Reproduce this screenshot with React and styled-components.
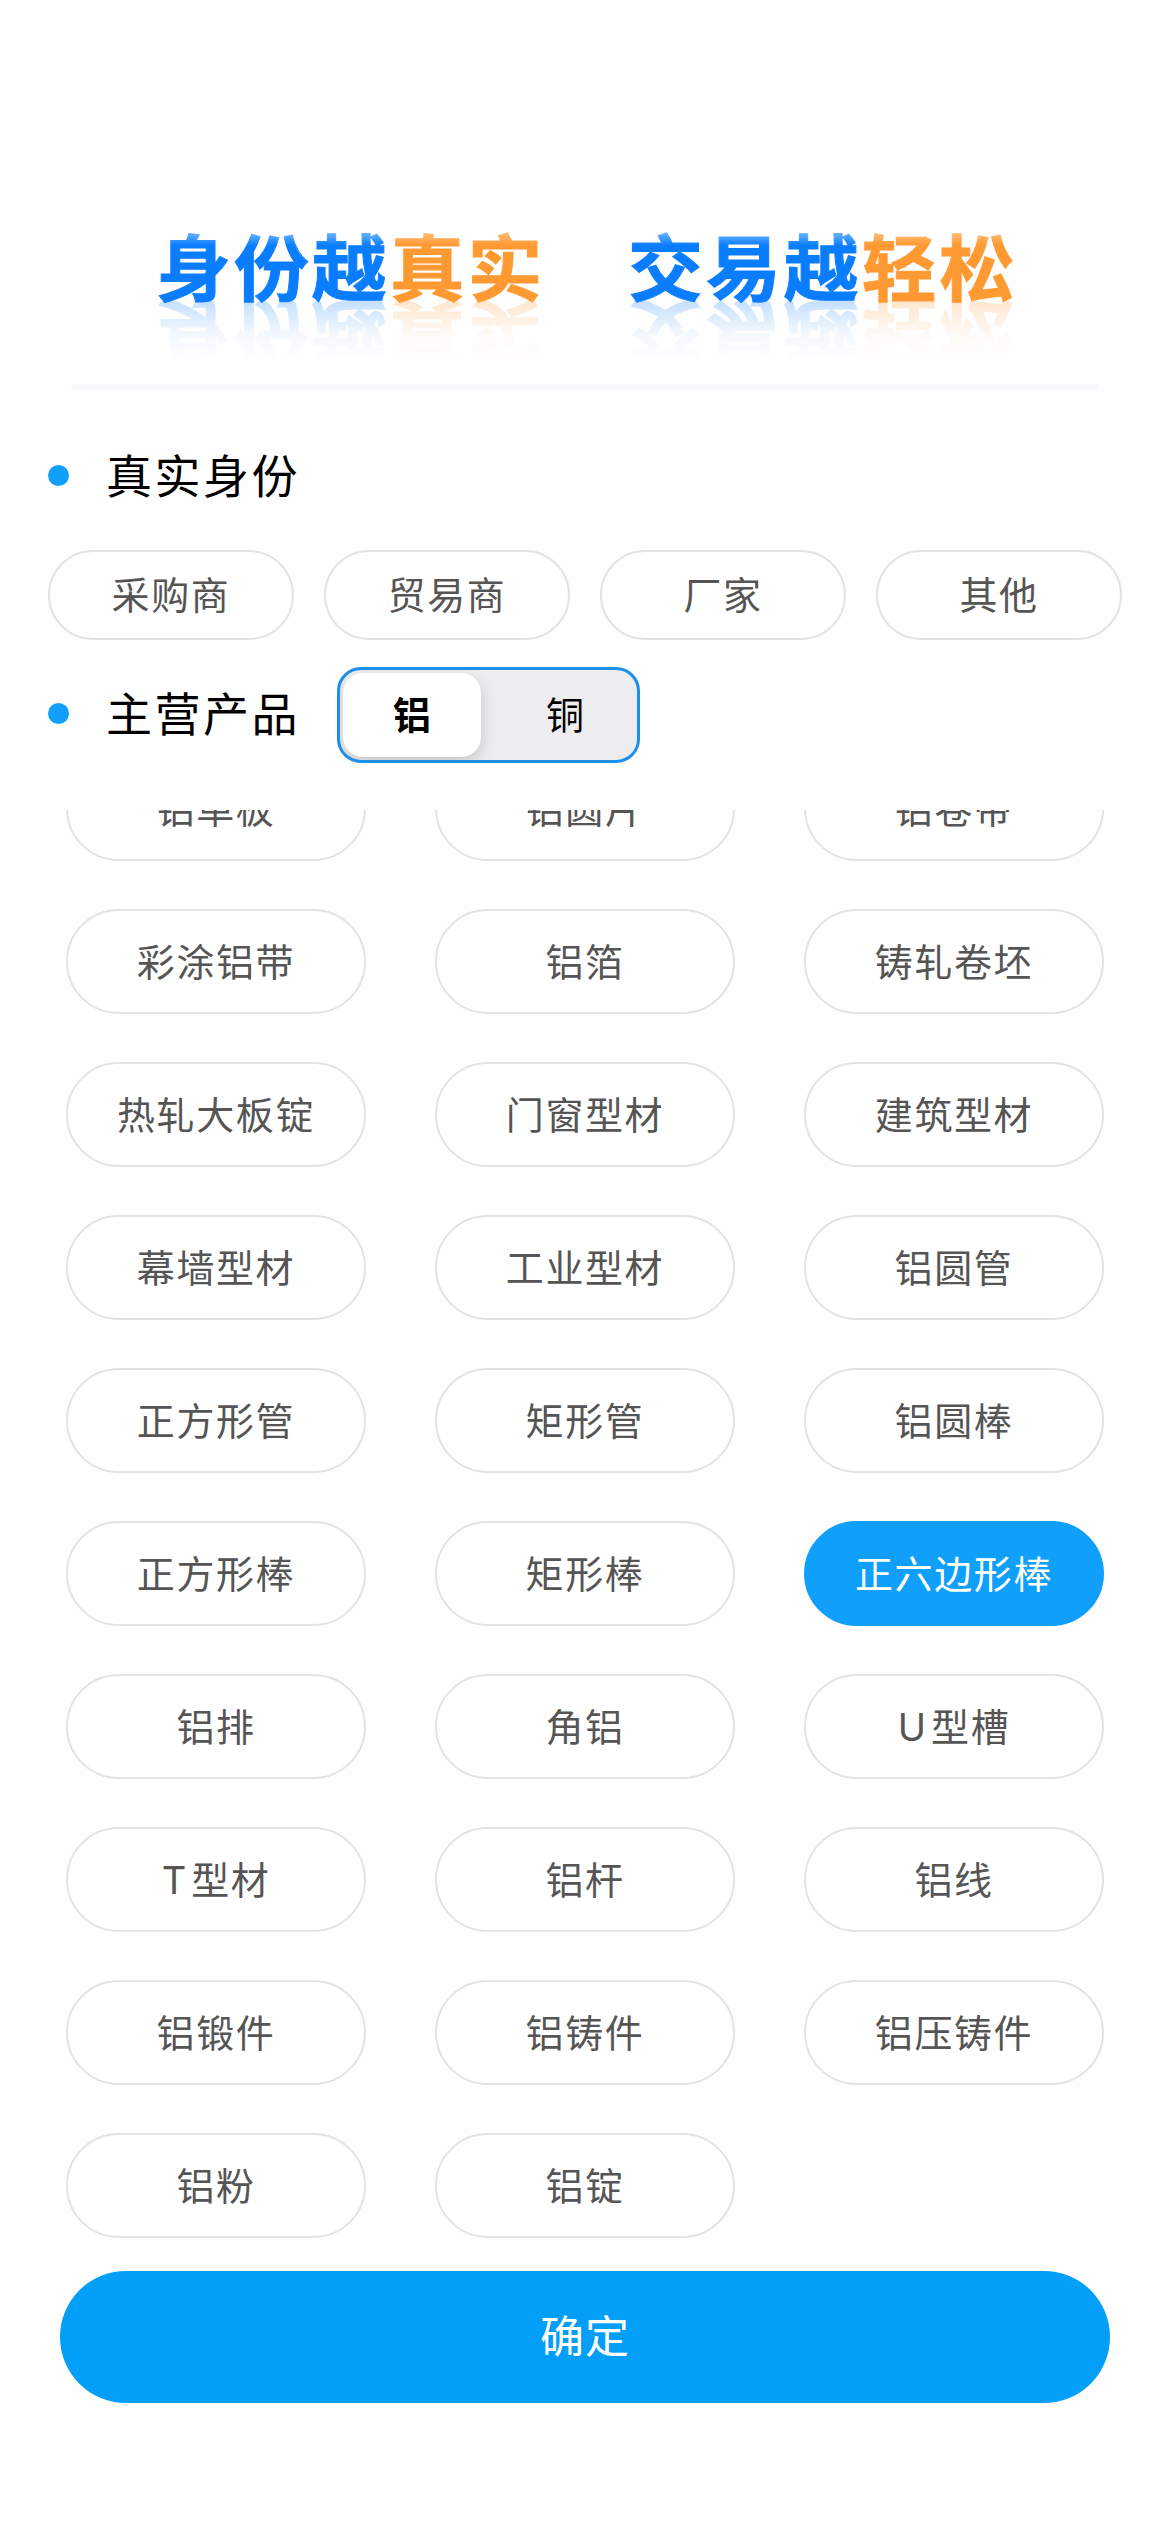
import React, { useState } from "react";
import styled, { createGlobalStyle } from "styled-components";

const GlobalStyle = createGlobalStyle`
  * { box-sizing: border-box; }
  body {
    margin: 0;
    background: #fefefe;
    font-family: Inter, "Noto Sans CJK SC", sans-serif;
    color: #000;
  }
  button { font-family: inherit; padding: 0; margin: 0; cursor: pointer; }
`;

const Page = styled.main`
  width: 1170px;
  height: 2532px;
  display: flex;
  flex-direction: column;
  overflow: hidden;
`;

const Banner = styled.header`
  display: flex;
  gap: 97px;
  height: 390px;
  margin: 0 72px;
  padding: 229px 0 0 84px;
  border-bottom: 6px solid #f8f9fc;
`;

const Slogan = styled.div`
  display: flex;
  width: 375px;
  height: 74px;
  transform: scaleX(1.04);
  transform-origin: left;
  -webkit-box-reflect: below -5px linear-gradient(to bottom, transparent 12%, rgba(0, 0, 0, 0.04) 50%, rgba(0, 0, 0, 0.25) 100%);
`;

const SloganWord = styled.span`
  font-family: "Noto Sans CJK SC", sans-serif;
  font-size: 72px;
  font-weight: 700;
  letter-spacing: 2.9px;
  line-height: 69px;
  white-space: nowrap;
  color: transparent;
  -webkit-text-stroke: 1px transparent;
  background: linear-gradient(
    to bottom,
    ${(p) => (p.$accent ? "#ffb56a 0 8%, #ff9a32 22%" : "#5aabff 0 8%, #0a7dff 22%")}
  );
  -webkit-background-clip: text;
  background-clip: text;
`;

const SectionHead = styled.div`
  display: flex;
  align-items: center;
  height: ${(p) => p.$height}px;
  padding: ${(p) => p.$top || 0}px 0 ${(p) => p.$bottom || 0}px 48px;
`;

const Dot = styled.i`
  width: 21px;
  height: 21px;
  border-radius: 50%;
  background: #109ffa;
`;

const SectionTitle = styled.h2`
  width: 194px;
  margin: 0 0 0 37px;
  font-size: 46px;
  font-weight: 400;
  letter-spacing: 2.5px;
  line-height: 60px;
  white-space: nowrap;
`;

const Roles = styled.div`
  display: flex;
  gap: 30px;
  margin: 0 48px;
`;

const Pill = styled.button`
  display: flex;
  align-items: center;
  justify-content: center;
  width: ${(p) => p.$width}px;
  height: ${(p) => p.$height}px;
  border: 2px solid ${(p) => (p.$active ? "#109ffa" : "#e3e3e3")};
  border-radius: 60px;
  background: ${(p) => (p.$active ? "#109ffa" : "#fff")};
  color: ${(p) => (p.$active ? "#fff" : "#555")};
  font-size: 38px;
  letter-spacing: 1.6px;
  line-height: 50px;
`;

const PillLabel = styled.span`
  display: block;

  &::first-letter {
    letter-spacing: ${(p) => (p.$latin ? 5 : 1.6)}px;
  }
`;

const Segments = styled.div`
  display: flex;
  justify-content: space-between;
  width: 303px;
  height: 96px;
  margin: 3px 0 0 37px;
  padding: 3px;
  border: 3px solid #1b90ea;
  border-radius: 24px;
  background: #ededef;
  overflow: hidden;
`;

const Segment = styled.button`
  width: 138px;
  height: 84px;
  border: 0;
  border-radius: 20px;
  background: ${(p) => (p.$active ? "#fff" : "transparent")};
  box-shadow: ${(p) => (p.$active ? "0 6px 16px rgba(0, 0, 0, 0.16)" : "none")};
  color: #000;
  font-size: 38px;
  font-weight: ${(p) => (p.$active ? 700 : 400)};
  line-height: 50px;
`;

const ProductViewport = styled.section`
  display: flex;
  flex-direction: column;
  justify-content: flex-end;
  height: 1461px;
  padding-bottom: 33px;
  margin-top: 18px;
  overflow: hidden;
`;

const ProductGrid = styled.div`
  display: grid;
  flex: none;
  grid-template-columns: repeat(3, 300px);
  gap: 48px 69px;
  padding-left: 66px;
`;

const Confirm = styled.button`
  height: 132px;
  flex: none;
  margin: 0 60px;
  border: 0;
  border-radius: 66px;
  background: #029ef8;
  color: #fff;
  font-size: 44px;
  letter-spacing: 1px;
  line-height: 60px;
`;

const slogans = [
  ["身份越", "真实"],
  ["交易越", "轻松"],
];
const roles = ["采购商", "贸易商", "厂家", "其他"];
const metals = ["铝", "铜"];
const products = [
  "铝单板", "铝圆片", "铝卷带",
  "彩涂铝带", "铝箔", "铸轧卷坯",
  "热轧大板锭", "门窗型材", "建筑型材",
  "幕墙型材", "工业型材", "铝圆管",
  "正方形管", "矩形管", "铝圆棒",
  "正方形棒", "矩形棒", "正六边形棒",
  "铝排", "角铝", "U型槽",
  "T型材", "铝杆", "铝线",
  "铝锻件", "铝铸件", "铝压铸件",
  "铝粉", "铝锭",
];

export default function App() {
  const [role, setRole] = useState(null);
  const [metal, setMetal] = useState("铝");
  const [product, setProduct] = useState("正六边形棒");

  return (
    <Page>
      <GlobalStyle />
      <Banner>
        {slogans.map(([lead, accent]) => (
          <Slogan key={accent}>
            <SloganWord>{lead}</SloganWord>
            <SloganWord $accent>{accent}</SloganWord>
          </Slogan>
        ))}
      </Banner>

      <SectionHead $height={160} $top={11}>
        <Dot />
        <SectionTitle>真实身份</SectionTitle>
      </SectionHead>
      <Roles>
        {roles.map((name) => (
          <Pill key={name} $width={246} $height={90} $active={role === name} onClick={() => setRole(name)}>
            <PillLabel>{name}</PillLabel>
          </Pill>
        ))}
      </Roles>

      <SectionHead $height={152} $bottom={5}>
        <Dot />
        <SectionTitle>主营产品</SectionTitle>
        <Segments>
          {metals.map((name) => (
            <Segment key={name} $active={metal === name} onClick={() => setMetal(name)}>
              {name}
            </Segment>
          ))}
        </Segments>
      </SectionHead>

      <ProductViewport>
        <ProductGrid>
          {products.map((name) => (
            <Pill key={name} $width={300} $height={105} $active={product === name} onClick={() => setProduct(name)}>
              <PillLabel $latin={/^[A-Z]/.test(name)}>{name}</PillLabel>
            </Pill>
          ))}
        </ProductGrid>
      </ProductViewport>

      <Confirm>确定</Confirm>
    </Page>
  );
}
